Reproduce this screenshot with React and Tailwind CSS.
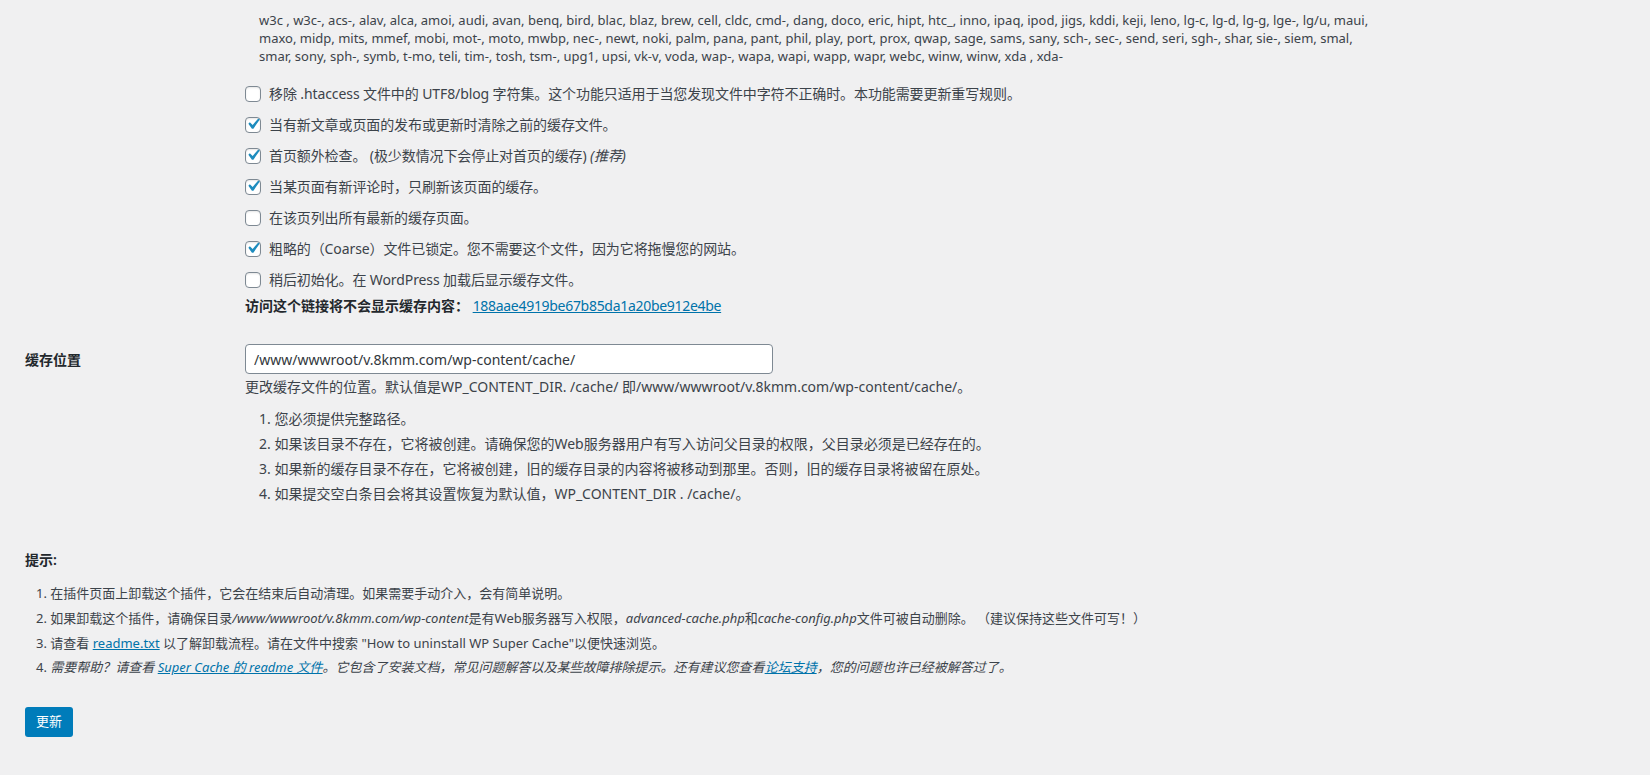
import React from "react";

const checks = [
    { checked: false, label: <>移除 .htaccess 文件中的 UTF8/blog 字符集。这个功能只适用于当您发现文件中字符不正确时。本功能需要更新重写规则。</> },
    { checked: true, label: <>当有新文章或页面的发布或更新时清除之前的缓存文件。</> },
    { checked: true, label: <>首页额外检查。 (极少数情况下会停止对首页的缓存) <em>(推荐)</em></> },
    { checked: true, label: <>当某页面有新评论时，只刷新该页面的缓存。</> },
    { checked: false, label: <>在该页列出所有最新的缓存页面。</> },
    { checked: true, label: <>粗略的（Coarse）文件已锁定。您不需要这个文件，因为它将拖慢您的网站。</> },
    { checked: false, label: <>稍后初始化。在 WordPress 加载后显示缓存文件。</> },
];

function Checkbox({ checked }) {
    return (
        <span className="w-4 h-4 shrink-0 mr-2 rounded-[4px] border border-[#7e8993] bg-white shadow-[inset_0_1px_2px_rgba(0,0,0,0.1)] flex items-center justify-center overflow-visible">
            {checked && (
                <svg viewBox="0 0 20 20" className="w-[22px] h-[22px] shrink-0 -mt-[2px]" fill="#1e8cbe">
                    <path d="M14.83 4.89l1.34.94-5.81 8.38H9.02L5.78 9.67l1.34-1.25 2.57 2.4z" />
                </svg>
            )}
        </span>
    );
}

function App() {
    return (
        <div
            className="min-h-screen bg-[#f0f0f1] text-[#3c434a] pl-[25px] pt-[11px] pb-10"
            style={{ fontFamily: '"Noto Sans", "Noto Sans CJK SC", sans-serif' }}
        >
            <div className="flex">
                <div className="w-[220px] shrink-0" />
                <div className="text-[14px]">
                    <p className="ml-[14px] text-[13px] leading-[18px] whitespace-nowrap">
                        w3c , w3c-, acs-, alav, alca, amoi, audi, avan, benq, bird, blac, blaz, brew, cell, cldc, cmd-, dang, doco, eric, hipt, htc_, inno, ipaq, ipod, jigs, kddi, keji, leno, lg-c, lg-d, lg-g, lge-, lg/u, maui,
                        <br />
                        maxo, midp, mits, mmef, mobi, mot-, moto, mwbp, nec-, newt, noki, palm, pana, pant, phil, play, port, prox, qwap, sage, sams, sany, sch-, sec-, send, seri, sgh-, shar, sie-, siem, smal,
                        <br />
                        smar, sony, sph-, symb, t-mo, teli, tim-, tosh, tsm-, upg1, upsi, vk-v, voda, wap-, wapa, wapi, wapp, wapr, webc, winw, winw, xda , xda-
                    </p>
                    <div className="mt-[13px]">
                        {checks.map((c, i) => (
                            <label key={i} className="h-[31px] flex items-center">
                                <Checkbox checked={c.checked} />
                                <span className="tracking-[-0.1px]">{c.label}</span>
                            </label>
                        ))}
                    </div>
                    <p className="leading-[21px]">
                        <strong className="font-semibold text-[#23282d]">访问这个链接将不会显示缓存内容：</strong>{" "}
                        <a href="#" className="text-[#0073aa] underline tracking-[-0.3px]">188aae4919be67b85da1a20be912e4be</a>
                    </p>
                </div>
            </div>

            <div className="flex mt-[28px] text-[14px]">
                <div className="w-[220px] shrink-0 pt-[5px] leading-[21px] font-semibold text-[#23282d]">缓存位置</div>
                <div>
                    <input
                        type="text"
                        readOnly
                        value="/www/wwwroot/v.8kmm.com/wp-content/cache/"
                        className="w-[528px] h-[30px] px-2 rounded-[4px] border border-[#7e8993] bg-white text-[14px] text-[#32373c] outline-none"
                    />
                    <p className="mt-[2px] leading-[21px]">
                        更改缓存文件的位置。默认值是WP_CONTENT_DIR. /cache/ 即/www/wwwroot/v.8kmm.com/wp-content/cache/。
                    </p>
                    <ol className="mt-[9px] ml-[14px] leading-[25px]">
                        <li>1. 您必须提供完整路径。</li>
                        <li>2. 如果该目录不存在，它将被创建。请确保您的Web服务器用户有写入访问父目录的权限，父目录必须是已经存在的。</li>
                        <li>3. 如果新的缓存目录不存在，它将被创建，旧的缓存目录的内容将被移动到那里。否则，旧的缓存目录将被留在原处。</li>
                        <li>4. 如果提交空白条目会将其设置恢复为默认值，WP_CONTENT_DIR . /cache/。</li>
                    </ol>
                </div>
            </div>

            <p className="mt-[43px] text-[14px] leading-[21px] font-semibold text-[#23282d]">提示:</p>
            <ol className="mt-[11px] ml-[11px] text-[13px] leading-[24.8px]">
                <li>1. 在插件页面上卸载这个插件，它会在结束后自动清理。如果需要手动介入，会有简单说明。</li>
                <li>
                    2. 如果卸载这个插件，请确保目录<em>/www/wwwroot/v.8kmm.com/wp-content</em>是有Web服务器写入权限，<em>advanced-cache.php</em>和<em>cache-config.php</em>文件可被自动删除。 （建议保持这些文件可写！）
                </li>
                <li>
                    3. 请查看 <a href="#" className="text-[#0073aa] underline">readme.txt</a> 以了解卸载流程。请在文件中搜索 "How to uninstall WP Super Cache"以便快速浏览。
                </li>
                <li>
                    4. <em>
                        需要帮助？请查看 <a href="#" className="text-[#0073aa] underline">Super Cache 的 readme 文件</a>。它包含了安装文档，常见问题解答以及某些故障排除提示。还有建议您查看<a href="#" className="text-[#0073aa] underline">论坛支持</a>，您的问题也许已经被解答过了。
                    </em>
                </li>
            </ol>

            <button className="mt-[27px] h-[30px] w-[48px] rounded-[3px] bg-[#007cba] text-white text-[13px]">
                更新
            </button>
        </div>
    );
}

export default App;
